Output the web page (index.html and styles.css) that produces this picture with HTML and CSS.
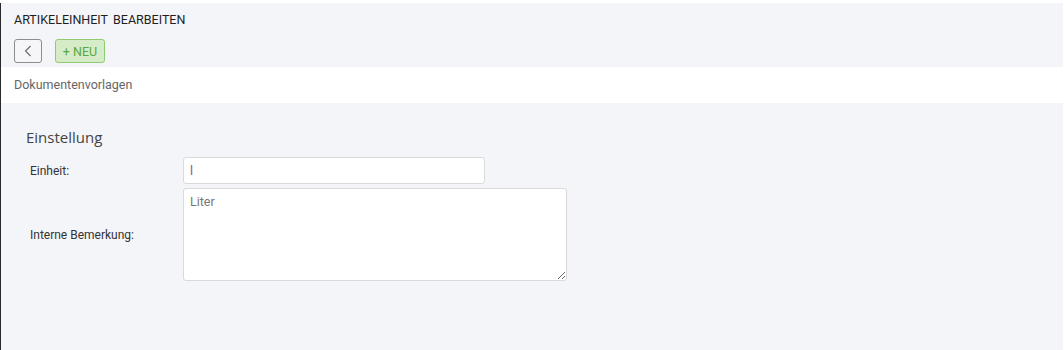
FILE: index.html
```html
<!DOCTYPE html>
<html lang="de">
<head>
<meta charset="utf-8">
<title>Artikeleinheit bearbeiten</title>
<link rel="stylesheet" href="styles.css">
</head>
<body>
<div class="frame">
  <header class="head">
    <h1 class="title"><span>ARTIKELEINHEIT</span><span>BEARBEITEN</span></h1>
    <div class="toolbar">
      <button class="btn btn-back" type="button" aria-label="Zurück">
        <svg width="8" height="12" viewBox="0 0 8 12"><path d="M6.5 1 L1.5 6 L6.5 11" fill="none" stroke="#666" stroke-width="1.1"/></svg>
      </button>
      <button class="btn btn-new" type="button">+ NEU</button>
    </div>
  </header>
  <nav class="tabs">Dokumentenvorlagen</nav>
  <main class="content">
    <h2 class="section">Einstellung</h2>
    <div class="form">
      <label class="label" for="einheit">Einheit:</label>
      <input class="input" id="einheit" value="l">
      <label class="label" for="bem">Interne Bemerkung:</label>
      <textarea class="textarea" id="bem">Liter</textarea>
    </div>
  </main>
</div>
</body>
</html>
```
FILE: styles.css
```css
* { box-sizing: border-box; }
html, body { margin: 0; padding: 0; height: 100%; }
body {
  font-family: Roboto, "Liberation Sans", sans-serif;
  background: #ffffff;
  color: #333;
}
.frame {
  height: 350px;
  margin-top: 3px;
  border-left: 1px solid #2a2a2a;
  margin-right: 1px;
  background: #f4f5f9;
  display: flex;
  flex-direction: column;
}
.head {
  height: 64px;
  padding: 9px 0 0 13px;
}
.title {
  margin: 0;
  font-size: 12.5px;
  font-weight: 400;
  color: #1e1e1e;
  line-height: 15px;
  display: flex;
  gap: 5px;
}
.toolbar {
  display: flex;
  gap: 13px;
  margin-top: 12px;
}
.btn {
  height: 24px;
  border-radius: 3px;
  font-family: inherit;
  padding: 0;
  display: flex;
  align-items: center;
  justify-content: center;
}
.btn-back {
  width: 28px;
  background: #f6f6f8;
  border: 1px solid #8d8d8d;
}
.btn-new {
  width: 50px;
  background: #d6ecc9;
  border: 1px solid #8fcb72;
  color: #5aa83c;
  font-size: 12.5px;
}
.tabs {
  height: 36px;
  background: #ffffff;
  padding-left: 13px;
  font-size: 12.5px;
  color: #666;
  line-height: 36px;
}
.content {
  padding: 24px 0 0 25px;
}
.section {
  margin: 0 0 10px 0;
  font-family: "Open Sans", sans-serif;
  font-size: 15px;
  font-weight: 500;
  color: #444;
  line-height: 20px;
}
.form {
  display: grid;
  grid-template-columns: 157px auto;
  row-gap: 4px;
  align-items: center;
  justify-items: start;
}
.label {
  font-size: 12px;
  color: #333;
  padding-left: 4px;
}
.input {
  width: 302px;
  height: 27px;
  border: 1px solid #d9d9dc;
  border-radius: 3px;
  background: #fff;
  padding: 0 6px;
  font-family: inherit;
  font-size: 12.5px;
  color: #8a5a8e;
  outline: none;
}
.textarea {
  width: 384px;
  height: 93px;
  border: 1px solid #d9d9dc;
  border-radius: 3px;
  background: #fff;
  padding: 5px 6px;
  font-family: inherit;
  font-size: 12.5px;
  color: #777;
  resize: both;
  outline: none;
}
```
